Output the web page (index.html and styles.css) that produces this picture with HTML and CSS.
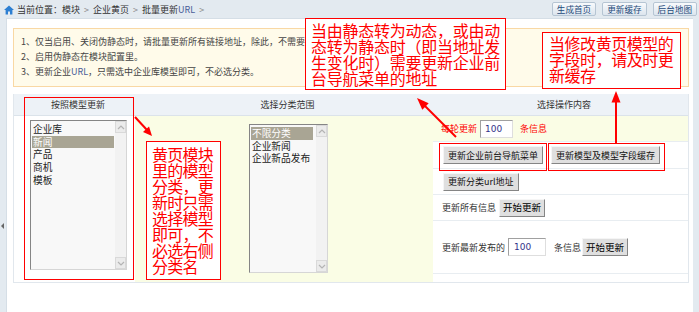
FILE: index.html
```html
<!DOCTYPE html>
<html lang="zh-CN">
<head>
    <meta charset="UTF-8">
    <meta name="viewport" content="width=device-width, initial-scale=1.0">
    <title>批量更新URL</title>
    <link rel="stylesheet" href="styles.css">
</head>
<body>

<div class="topbar">
    <div class="crumb">
        <svg class="home" width="10" height="10" viewBox="0 0 10 10">
            <path d="M5 0.5 L0 5 H1.6 V9.6 H4 V6.6 H6 V9.6 H8.4 V5 H10 Z" fill="#2d7fd2"/>
        </svg>
        当前位置：模块<span class="sep">&gt;</span>企业黄页<span class="sep">&gt;</span>批量更新<span class="latin">URL</span><span class="sep">&gt;</span>
    </div>
    <div class="toplinks">
        <a class="tbtn">生成首页</a>
        <a class="tbtn">更新缓存</a>
        <a class="tbtn">后台地图</a>
    </div>
</div>

<div class="frame">
    <div class="side"><span class="handle"></span></div>
    <div class="main">
        <div class="notice">
            <p>1、仅当启用、关闭伪静态时，请批量更新所有链接地址，除此，不需要批量更新。</p>
            <p>2、启用伪静态在模块配置里。</p>
            <p>3、更新企业<span class="latin">URL</span>，只需选中企业库模型即可，不必选分类。</p>
        </div>

        <div class="grid">
            <div class="th">按照模型更新</div>
            <div class="th">选择分类范围</div>
            <div class="th">选择操作内容</div>

            <div class="cell models">
                <div class="listbox lb-models">
                    <ul>
                        <li>企业库</li>
                        <li class="on">新闻</li>
                        <li>产品</li>
                        <li>商机</li>
                        <li>模板</li>
                    </ul>
                    <div class="sbar">
                        <span class="sbtn"><svg width="8" height="5" viewBox="0 0 8 5"><polyline points="1,4 4,1 7,4" fill="none" stroke="#b4b4b4" stroke-width="1.2"/></svg></span>
                        <span class="sbtn"><svg width="8" height="5" viewBox="0 0 8 5"><polyline points="1,1 4,4 7,1" fill="none" stroke="#b4b4b4" stroke-width="1.2"/></svg></span>
                    </div>
                </div>
            </div>

            <div class="cell cats">
                <div class="listbox lb-cats">
                    <ul>
                        <li class="on">不限分类</li>
                        <li>企业新闻</li>
                        <li>企业新品发布</li>
                    </ul>
                    <div class="sbar">
                        <span class="sbtn"><svg width="8" height="5" viewBox="0 0 8 5"><polyline points="1,4 4,1 7,4" fill="none" stroke="#b4b4b4" stroke-width="1.2"/></svg></span>
                        <span class="sbtn"><svg width="8" height="5" viewBox="0 0 8 5"><polyline points="1,1 4,4 7,1" fill="none" stroke="#b4b4b4" stroke-width="1.2"/></svg></span>
                    </div>
                </div>
            </div>

            <div class="cell ops">
                <div class="op op-rate">
                    <span class="red">每轮更新</span>
                    <input class="num num-rate" type="text" value="100">
                    <span class="red unit">条信息</span>
                </div>
                <div class="op op-btns">
                    <button class="btn">更新企业前台导航菜单</button>
                    <button class="btn btn-next">更新模型及模型字段缓存</button>
                </div>
                <div class="op op-url">
                    <button class="btn">更新分类url地址</button>
                </div>
                <div class="op op-all">
                    <span>更新所有信息</span>
                    <button class="btn btn-go">开始更新</button>
                </div>
                <div class="op op-latest">
                    <span>更新最新发布的</span>
                    <input class="num num-latest" type="text" value="100">
                    <span class="unit-latest">条信息</span>
                    <button class="btn btn-go">开始更新</button>
                </div>
            </div>
        </div>
    </div>
</div>

<!-- annotations -->
<div class="note note-a">当由静态转为动态，或由动<br>态转为静态时（即当地址发<br>生变化时）需要更新企业前<br>台导航菜单的地址</div>
<div class="note note-b">当修改黄页模型的<br>字段时，请及时更<br>新缓存</div>
<div class="note note-c">黄页模块<br>里的模型<br>分类，更<br>新时只需<br>选择模型<br>即可，不<br>必选右侧<br>分类名</div>
<div class="mark mark-models"></div>
<div class="mark mark-nav"></div>
<div class="mark mark-cache"></div>

<svg class="arrows" width="699" height="312" viewBox="0 0 699 312">
    <g stroke="#f00" stroke-width="2" fill="none">
        <line x1="135" y1="117" x2="147" y2="130"/>
        <line x1="456" y1="137" x2="425" y2="106"/>
        <line x1="616" y1="143" x2="616" y2="101"/>
    </g>
    <g fill="#f00">
        <polygon points="152,136 143,132 149,126.5"/>
        <polygon points="417,98 428.7,103.3 422.3,109.7"/>
        <polygon points="616,91 611.5,102.5 620.5,102.5"/>
    </g>
</svg>

</body>
</html>
```

FILE: styles.css
```css
body {
    margin: 0;
    width: 699px;
    height: 312px;
    overflow: hidden;
    background-color: #e3eaf0;
    font-family: "Noto Sans CJK SC", sans-serif;
    font-size: 9px;
    color: #333;
    position: relative;
}

/* top bar */
.topbar {
    height: 18px;
    display: flex;
    align-items: center;
    justify-content: space-between;
    padding: 0 2px 0 4px;
}
.crumb {
    display: flex;
    align-items: center;
    line-height: 12px;
    padding-top: 1px;
}
.home {
    margin-right: 3px;
}
.sep {
    color: #888;
    margin: 0 4px;
}
.latin {
    color: #4a5d98;
}
.toplinks {
    display: flex;
}
.tbtn {
    display: block;
    height: 14px;
    line-height: 12px;
    box-sizing: border-box;
    padding: 0 4px;
    margin-left: 6px;
    border: 1px solid #b6c5d3;
    border-radius: 2px;
    background: linear-gradient(#f8fafc, #dce5ee);
    color: #244a7a;
    font-size: 8.6px;
}

/* frame */
.frame {
    display: flex;
    height: 294px;
}
.side {
    width: 6px;
    flex: none;
    box-sizing: border-box;
    padding: 205px 0 0 1px;
}
.handle {
    display: block;
    width: 0;
    height: 0;
    border-top: 3px solid transparent;
    border-bottom: 3px solid transparent;
    border-right: 3px solid #666;
}
.main {
    flex: 1;
    margin-right: 6px;
    background-color: #fff;
    border-top: 1px solid #d5dee6;
    border-left: 1px solid #d5dee6;
    padding: 9px 4px 0 6px;
}

/* notice */
.notice {
    height: 59px;
    box-sizing: border-box;
    border: 1px solid #f9d8a4;
    background-color: #fffbea;
    padding: 6px 7px;
    line-height: 14.8px;
    color: #444;
}
.notice p {
    margin: 0;
    white-space: nowrap;
}

/* table */
.grid {
    margin-top: 7px;
    display: grid;
    grid-template-columns: 121px 298px 1fr;
    grid-template-rows: 22px 166px;
    border: 1px solid #e1e7ed;
    border-top: none;
}
.th {
    background-color: #edf2f7;
    border-bottom: 1px solid #dbe3ea;
    text-align: center;
    line-height: 21px;
    padding-left: 7px;
}
.models {
    padding: 4px 0 0 16px;
}
.cats {
    background-color: #fafde5;
    padding: 8px 0 0 114px;
}
.ops {
    display: flex;
    flex-direction: column;
}

/* list boxes */
.listbox {
    display: flex;
    box-sizing: border-box;
    border: 1px solid;
    border-color: #858585 #d6d6d6 #d6d6d6 #858585;
    background-color: #f8f8f8;
}
.lb-models {
    width: 97px;
    height: 150px;
}
.lb-cats {
    width: 79px;
    height: 149px;
}
.listbox ul {
    flex: 1;
    margin: 0;
    padding: 2px 1px;
    list-style: none;
    font-size: 9.7px;
    line-height: 12.7px;
    color: #222;
}
.listbox li {
    padding-left: 1px;
    white-space: nowrap;
}
.listbox li.on {
    background-color: #a9a594;
    color: #fff;
}
.lb-cats ul {
    padding-right: 3px;
}
.sbar {
    width: 11px;
    flex: none;
    display: flex;
    flex-direction: column;
    justify-content: space-between;
    background-color: #f2f2f2;
}
.sbtn {
    height: 12px;
    box-sizing: border-box;
    border: 1px solid #d9d9d9;
    background-color: #ebebeb;
    display: flex;
    align-items: center;
    justify-content: center;
}

/* operation rows */
.op {
    display: flex;
    align-items: center;
    box-sizing: border-box;
    border-bottom: 1px solid #e8edf1;
    padding-left: 9px;
    white-space: nowrap;
}
.op-rate {
    height: 26px;
    background-color: #fafde5;
    padding-left: 8px;
}
.op-btns {
    height: 27px;
    padding-left: 10px;
}
.op-url {
    height: 26px;
    padding-left: 10px;
}
.op-all {
    height: 26px;
}
.op-latest {
    height: 53px;
}
.red {
    color: #f00;
}
.unit {
    margin-left: 7px;
}
.num {
    height: 18px;
    box-sizing: border-box;
    border: 1px solid;
    border-color: #a0a0a0 #dedede #dedede #a0a0a0;
    font-family: "DejaVu Sans", sans-serif;
    font-size: 9px;
    color: #33338a;
    padding: 0 0 0 4px;
    background-color: #fff;
}
.num-rate {
    width: 33px;
    margin-left: 3px;
}
.num-latest {
    width: 38px;
    margin-left: 3px;
    padding-left: 5px;
}
.unit-latest {
    margin-left: 8px;
}
.btn {
    height: 18px;
    box-sizing: border-box;
    padding: 0 4px;
    border: 1px solid;
    border-color: #f5f5f5 #858585 #858585 #f5f5f5;
    background-color: #dfdfdf;
    font-family: "Noto Sans CJK SC", sans-serif;
    font-size: 9px;
    line-height: 15px;
    color: #111;
}
.btn-next {
    margin-left: 8px;
}
.btn-go {
    margin-left: 3px;
    font-size: 9.5px;
    padding: 0 3px;
    color: #000;
}
.op-latest .btn-go {
    margin-left: 1px;
}

/* annotations */
.note {
    position: absolute;
    box-sizing: border-box;
    border: 1px solid #f00;
    background-color: #fff;
    color: #f00;
    font-size: 16px;
    line-height: 16px;
    white-space: nowrap;
}
.note-a {
    left: 305px;
    top: 18px;
    width: 201px;
    height: 72px;
    padding: 3px 0 0 5px;
    letter-spacing: -0.25px;
}
.note-b {
    left: 542px;
    top: 32px;
    width: 139px;
    height: 57px;
    padding: 2px 0 0 6px;
    letter-spacing: -0.45px;
}
.note-c {
    left: 146px;
    top: 141px;
    width: 75px;
    height: 139px;
    padding: 4px 0 0 5px;
    letter-spacing: -0.75px;
}
.mark {
    position: absolute;
    box-sizing: border-box;
    border: 1px solid #f00;
}
.mark-models {
    left: 24px;
    top: 97px;
    width: 110px;
    height: 183px;
}
.mark-nav {
    left: 439px;
    top: 143px;
    width: 108px;
    height: 28px;
}
.mark-cache {
    left: 548px;
    top: 143px;
    width: 117px;
    height: 28px;
}
.arrows {
    position: absolute;
    left: 0;
    top: 0;
    pointer-events: none;
}
```
